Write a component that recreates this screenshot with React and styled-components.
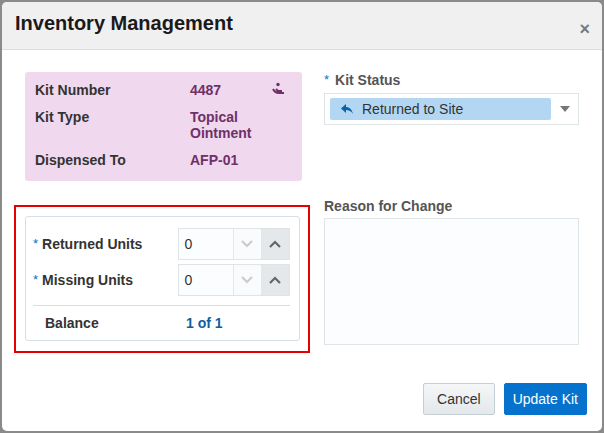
import React from "react";
import styled, { createGlobalStyle } from "styled-components";

const G = createGlobalStyle`
  html,body{margin:0;padding:0;background:#8a8a8a;}
  body{font-family:"Liberation Sans",Arial,sans-serif;}
`;
const Dialog = styled.div`
  margin:2px;width:600px;height:429px;background:#fff;border-radius:5px;overflow:hidden;
  display:flex;flex-direction:column;box-sizing:border-box;
`;
const Header = styled.div`
  height:48px;background:#f0f0f0;border-bottom:1px solid #d6dfe6;display:flex;
  align-items:center;justify-content:space-between;padding:0 12px 0 13px;box-sizing:border-box;
`;
const Title = styled.h1`margin:0;font-size:20px;font-weight:bold;color:#1a1a1a;margin-top:-4px;`;
const Close = styled.span`font-size:18px;color:#7a7a7a;font-weight:bold;margin-top:8px;`;
const Body = styled.div`
  flex:1;display:grid;grid-template-columns:277px 255px;column-gap:22px;
  padding:22px 0 0 23px;align-content:start;
`;
const Pink = styled.div`
  background:#f0d8ee;border-radius:3px;padding:10px 10px 12px 10px;height:109px;box-sizing:border-box;
  display:grid;grid-template-columns:155px 1fr 20px;row-gap:10px;font-size:14px;font-weight:bold;
`;
const L = styled.div`color:#333;`;
const V = styled.div`color:#6d3168;line-height:16px;`;
const Right = styled.div`padding-top:0;`;
const Lbl = styled.div`font-size:14px;font-weight:bold;color:#555;display:flex;gap:6px;margin-bottom:5px;`;
const Star = styled.span`color:#0572ce;font-weight:normal;font-size:13px;`;
const Select = styled.div`
  border:1px solid #dfe4e7;height:32px;box-sizing:border-box;display:flex;align-items:center;padding:0 8px 0 5px;gap:9px;
`;
const Chip = styled.div`
  flex:1;height:22px;background:#b3d7f2;border-radius:2px;display:flex;align-items:center;gap:8px;padding-left:10px;font-size:14px;color:#333;
`;
const Caret = styled.div`width:0;height:0;border-left:5px solid transparent;border-right:5px solid transparent;border-top:6px solid #777;`;
const RedBox = styled.div`
  margin:24px 0 0 -11px;border:2px solid #e60000;padding:9px 8px 10px 9px;width:296px;box-sizing:border-box;
`;
const Card = styled.div`border:1px solid #d6dfe6;border-radius:3px;padding:10px 9px 0 7px;`;
const Row = styled.div`display:flex;align-items:center;height:33px;margin-bottom:3px;`;
const RL = styled.div`width:146px;font-size:14px;font-weight:bold;color:#333;display:flex;gap:4px;`;
const Spin = styled.div`display:flex;border:1px solid #dfe4e7;height:32px;box-sizing:border-box;width:112px;`;
const Inp = styled.div`flex:1;font-size:14px;color:#333;display:flex;align-items:center;padding-left:5px;background:#fcfdfe;`;
const SB = styled.div`width:27px;display:flex;align-items:center;justify-content:center;border-left:1px solid #e4e8eb;background:${p=>p.$on?"#e4e8eb":"#fafbfc"};`;
const Bal = styled.div`border-top:1px solid #d6dfe6;margin-top:9px;height:34px;display:flex;align-items:center;font-size:14px;font-weight:bold;`;
const Textarea = styled.div`border:1px solid #dfe4e7;height:125px;background:#fcfdfe;`;
const Footer = styled.div`display:flex;justify-content:flex-end;gap:9px;padding:0 15px 16px 0;`;
const Btn = styled.button`
  height:32px;font-family:inherit;font-size:14px;border-radius:2px;padding:0 ${p=>p.$p?8:13}px;
  border:1px solid ${p=>p.$p?"#0572ce":"#c4ced7"};background:${p=>p.$p?"#0572ce":"linear-gradient(#f5f6f7,#e4e8eb)"};color:${p=>p.$p?"#fff":"#333"};
`;
const Chev = ({up,c}) => <svg width="12" height="8" viewBox="0 0 12 8"><path d={up?"M1 7L6 2l5 5":"M1 1l5 5 5-5"} fill="none" stroke={c} strokeWidth="2.2"/></svg>;

export default function App(){
  return <><G/><Dialog>
    <Header><Title>Inventory Management</Title><Close>×</Close></Header>
    <Body>
      <div>
        <Pink>
          <L>Kit Number</L><V>4487</V>
          <svg width="14" height="14" viewBox="0 0 14 14"><circle cx="6" cy="2.5" r="1.7" fill="#6d3168"/><path d="M1 7c1 2 3 4 6 4h5M4 7l2 2h4" fill="none" stroke="#6d3168" strokeWidth="2"/></svg>
          <L>Kit Type</L><V>Topical<br/>Ointment</V><span/>
          <L>Dispensed To</L><V>AFP-01</V><span/>
        </Pink>
        <RedBox><Card>
          <Row><RL><Star>*</Star>Returned Units</RL><Spin><Inp>0</Inp><SB><Chev c="#ccc"/></SB><SB $on><Chev up c="#666"/></SB></Spin></Row>
          <Row><RL><Star>*</Star>Missing Units</RL><Spin><Inp>0</Inp><SB><Chev c="#ccc"/></SB><SB $on><Chev up c="#666"/></SB></Spin></Row>
          <Bal><RL style={{paddingLeft:12,width:141}}>Balance</RL><span style={{color:"#0f5f9f"}}>1 of 1</span></Bal>
        </Card></RedBox>
      </div>
      <Right>
        <Lbl><Star>*</Star>Kit Status</Lbl>
        <Select><Chip><svg width="14" height="12" viewBox="0 0 14 12"><path d="M6 1L1 5.5 6 10V7c3 0 5 1 7 4-1-4-3-7-7-7z" fill="#0b62a8"/></svg>Returned to Site</Chip><Caret/></Select>
        <Lbl style={{marginTop:73,marginBottom:4}}>Reason for Change</Lbl>
        <Textarea/>
      </Right>
    </Body>
    <Footer><Btn>Cancel</Btn><Btn $p>Update Kit</Btn></Footer>
  </Dialog></>;
}
